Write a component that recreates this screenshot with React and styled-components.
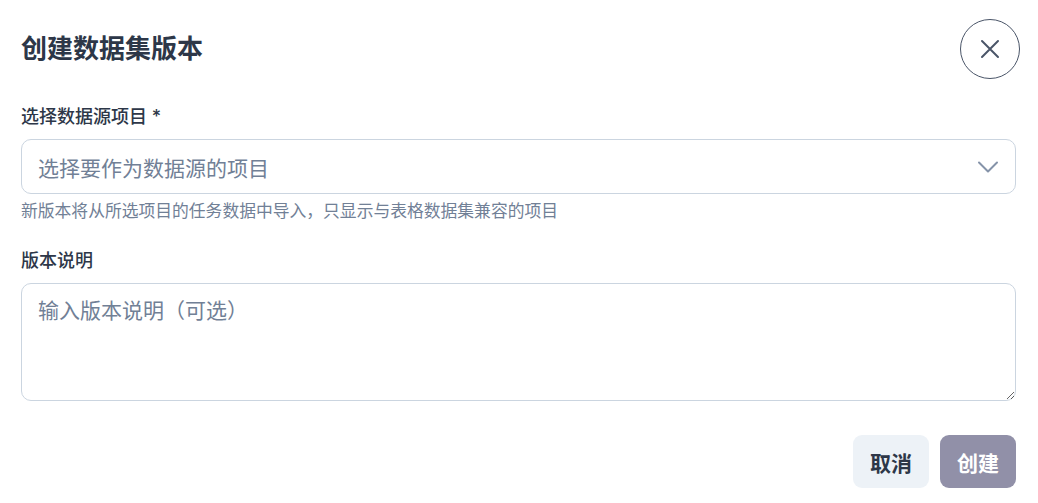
import styled, { createGlobalStyle } from 'styled-components';

const GlobalStyle = createGlobalStyle`
  body {
    margin: 0;
    background: #ffffff;
    font-family: "Inter", "Noto Sans CJK SC", sans-serif;
    color: #2d3748;
  }
`;

const Dialog = styled.div`
  padding: 19px 22px 16px 21px;
  display: flex;
  flex-direction: column;
`;

const Header = styled.div`
  display: flex;
  align-items: center;
  justify-content: space-between;
  margin-right: -4px;
`;

const Title = styled.h2`
  margin: 0;
  font-size: 26px;
  font-weight: 700;
  color: #2d3748;
  line-height: 1.2;
`;

const CloseButton = styled.button`
  width: 60px;
  height: 60px;
  border-radius: 50%;
  border: 1px solid #4a5568;
  background: transparent;
  display: flex;
  align-items: center;
  justify-content: center;
  padding: 0;
  cursor: pointer;
`;

const Field = styled.div`
  display: flex;
  flex-direction: column;
  margin-top: ${({ $top }) => $top}px;
`;

const Label = styled.label`
  font-size: 18px;
  font-weight: 500;
  line-height: 27px;
  color: #2d3748;
  margin-bottom: 9px;
`;

const SelectBox = styled.div`
  height: 55px;
  box-sizing: border-box;
  border: 1px solid #cbd5e0;
  border-radius: 10px;
  display: flex;
  align-items: center;
  justify-content: space-between;
  padding: 0 16px 0 16px;
  cursor: pointer;
`;

const Placeholder = styled.span`
  font-size: 21px;
  color: #718096;
`;

const Helper = styled.div`
  font-size: 16.8px;
  line-height: 25px;
  color: #718096;
  margin-top: 5px;
`;

const TextArea = styled.textarea`
  height: 118px;
  box-sizing: border-box;
  border: 1px solid #cbd5e0;
  border-radius: 10px;
  padding: 11px 16px;
  font-family: inherit;
  font-size: 21px;
  line-height: 31px;
  color: #2d3748;
  outline: none;
  resize: vertical;

  &::placeholder {
    color: #718096;
  }
`;

const Footer = styled.div`
  display: flex;
  justify-content: flex-end;
  gap: 11px;
  margin-top: 34px;
`;

const Button = styled.button`
  height: 53px;
  padding: 0 17px;
  border: none;
  border-radius: 9px;
  font-family: inherit;
  font-size: 21px;
  font-weight: 600;
  background: ${({ $primary }) => ($primary ? '#9190a8' : '#edf2f7')};
  color: ${({ $primary }) => ($primary ? '#ffffff' : '#2d3748')};
  cursor: ${({ $primary }) => ($primary ? 'not-allowed' : 'pointer')};
`;

export default function App() {
  return (
    <>
      <GlobalStyle />
      <Dialog>
        <Header>
          <Title>创建数据集版本</Title>
          <CloseButton aria-label="关闭">
            <svg width="24" height="24" viewBox="0 0 24 24" fill="none" stroke="#4a5568" strokeWidth="2" strokeLinecap="round">
              <path d="M4 4l16 16M20 4L4 20" />
            </svg>
          </CloseButton>
        </Header>

        <Field $top={24}>
          <Label>选择数据源项目 *</Label>
          <SelectBox>
            <Placeholder>选择要作为数据源的项目</Placeholder>
            <svg width="22" height="12" viewBox="0 0 22 12" fill="none" stroke="#8593a9" strokeWidth="2" strokeLinecap="round" strokeLinejoin="round">
              <path d="M2 1.5l9 9 9-9" />
            </svg>
          </SelectBox>
          <Helper>新版本将从所选项目的任务数据中导入，只显示与表格数据集兼容的项目</Helper>
        </Field>

        <Field $top={23}>
          <Label>版本说明</Label>
          <TextArea placeholder="输入版本说明（可选）" />
        </Field>

        <Footer>
          <Button>取消</Button>
          <Button $primary disabled>创建</Button>
        </Footer>
      </Dialog>
    </>
  );
}
